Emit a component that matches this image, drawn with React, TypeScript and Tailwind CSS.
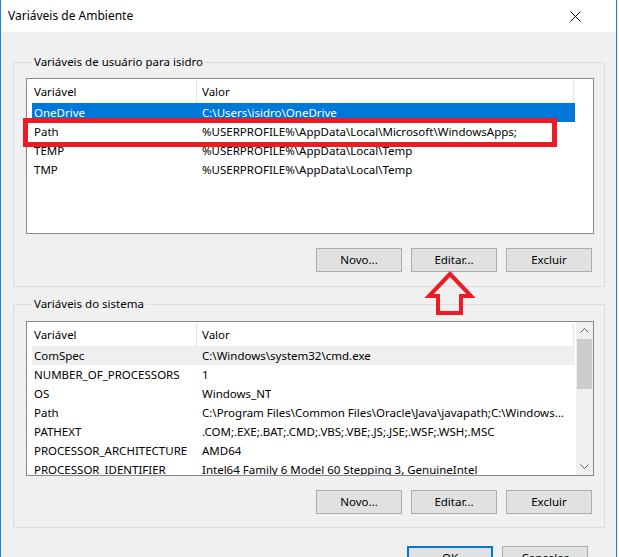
import React from 'react';

const userVars: [string, string][] = [
  ['OneDrive', 'C:\\Users\\isidro\\OneDrive'],
  ['Path', '%USERPROFILE%\\AppData\\Local\\Microsoft\\WindowsApps;'],
  ['TEMP', '%USERPROFILE%\\AppData\\Local\\Temp'],
  ['TMP', '%USERPROFILE%\\AppData\\Local\\Temp'],
];

const systemVars: [string, string][] = [
  ['ComSpec', 'C:\\Windows\\system32\\cmd.exe'],
  ['NUMBER_OF_PROCESSORS', '1'],
  ['OS', 'Windows_NT'],
  ['Path', 'C:\\Program Files\\Common Files\\Oracle\\Java\\javapath;C:\\Windows...'],
  ['PATHEXT', '.COM;.EXE;.BAT;.CMD;.VBS;.VBE;.JS;.JSE;.WSF;.WSH;.MSC'],
  ['PROCESSOR_ARCHITECTURE', 'AMD64'],
  ['PROCESSOR_IDENTIFIER', 'Intel64 Family 6 Model 60 Stepping 3, GenuineIntel'],
];

function WinButton({ label, primary }: { label: string; primary?: boolean }) {
  return (
    <button
      className={
        'w-[86px] h-[24px] bg-[#e1e1e1] text-black flex items-center justify-center ' +
        (primary ? 'border-2 border-[#0078d7]' : 'border border-[#adadad]')
      }
    >
      {label}
    </button>
  );
}

function ListView({
  rows,
  selected,
  hovered,
  scroll,
  height,
}: {
  rows: [string, string][];
  selected?: number;
  hovered?: number;
  scroll?: boolean;
  height: string;
}) {
  return (
    <div className={'w-[568px] bg-white border border-[#828790] flex overflow-hidden ' + height}>
      <div className="w-[548px] flex flex-col">
        <div className="h-[24px] flex shrink-0 pt-px">
          <div className="w-[170px] pl-[7px] flex items-center border-r border-[#e5e5e5]">Variável</div>
          <div className="w-[377px] pl-[5px] flex items-center border-r border-[#e5e5e5]">Valor</div>
        </div>
        <div className="pl-[5px] flex flex-col">
          {rows.map(([name, value], i) => (
            <div
              key={name + i}
              className={
                'w-[543px] h-[19px] pt-px flex items-center whitespace-nowrap ' +
                (i === selected ? 'bg-[#0078d7] text-white' : i === hovered ? 'bg-[#efefef]' : '')
              }
            >
              <div className="w-[165px] pl-[2px] shrink-0">{name}</div>
              <div className="pl-[5px] overflow-hidden">{value}</div>
            </div>
          ))}
        </div>
      </div>
      {scroll && (
        <div className="w-[17px] bg-[#f0f0f0] flex flex-col items-center justify-between ml-px">
          <svg width="17" height="17" viewBox="0 0 17 17">
            <path d="M4.5 10.5 L8.5 6.5 L12.5 10.5" fill="none" stroke="#606060" strokeWidth="1" />
          </svg>
          <div className="w-[15px] h-[50px] bg-[#cdcdcd] mb-auto" />
          <svg width="17" height="17" viewBox="0 0 17 17">
            <path d="M4.5 6.5 L8.5 10.5 L12.5 6.5" fill="none" stroke="#606060" strokeWidth="1" />
          </svg>
        </div>
      )}
    </div>
  );
}

export default function App() {
  return (
    <div
      className="w-[619px] h-[557px] overflow-hidden bg-white relative text-[11.5px] text-black"
      style={{ fontFamily: '"Noto Sans", "Open Sans", sans-serif' }}
    >
      <div className="w-[617px] h-full border-x border-[#1883d7] flex flex-col">
        <div className="h-[32px] bg-white flex items-center justify-between pl-[7px] pr-[35px] shrink-0">
          <span className="text-[12px]">Variáveis de Ambiente</span>
          <svg width="11" height="11" viewBox="0 0 11 11">
            <path d="M0.5 0.5 L10.5 10.5 M10.5 0.5 L0.5 10.5" stroke="#000" strokeWidth="1" />
          </svg>
        </div>

        <div className="flex-1 bg-[#f0f0f0] pl-[12px] pt-[22px]">
          <fieldset className="w-[592px] h-[233px] border border-[#dcdcdc] pl-[12px] pr-[10px]">
            <legend className="ml-[6px] px-[2px] h-[16px] leading-[16px]">Variáveis de usuário para isidro</legend>
            <div className="mt-[8px]">
              <ListView rows={userVars} selected={0} height="h-[156px]" />
            </div>
            <div className="mt-[14px] mr-[2px] flex justify-end gap-[9px]">
              <WinButton label="Novo..." />
              <WinButton label="Editar..." />
              <WinButton label="Excluir" />
            </div>
          </fieldset>

          <fieldset className="mt-[9px] w-[592px] h-[232px] border border-[#dcdcdc] pl-[12px] pr-[10px]">
            <legend className="ml-[6px] px-[2px] h-[16px] leading-[16px]">Variáveis do sistema</legend>
            <div className="mt-[9px]">
              <ListView rows={systemVars} hovered={0} scroll height="h-[155px]" />
            </div>
            <div className="mt-[14px] mr-[2px] flex justify-end gap-[9px]">
              <WinButton label="Novo..." />
              <WinButton label="Editar..." />
              <WinButton label="Excluir" />
            </div>
          </fieldset>

          <div className="mt-[18px] w-[592px] flex justify-end gap-[9px] pr-[17px]">
            <WinButton label="OK" primary />
            <WinButton label="Cancelar" />
          </div>
        </div>
      </div>

      {/* red annotation box around Path */}
      <div className="absolute left-[23px] top-[118px] w-[534px] h-[29px] border-[5px] border-[#ed1c24]" />

      {/* red arrow pointing at Editar */}
      <svg className="absolute left-[424px] top-[269px]" width="54" height="48" viewBox="0 0 54 48">
        <path
          d="M26 5 L47 27 L37 27 L37 44 L14 44 L14 27 L5 27 Z"
          fill="none"
          stroke="#ed1c24"
          strokeWidth="4"
          strokeLinejoin="miter"
        />
      </svg>
    </div>
  );
}
